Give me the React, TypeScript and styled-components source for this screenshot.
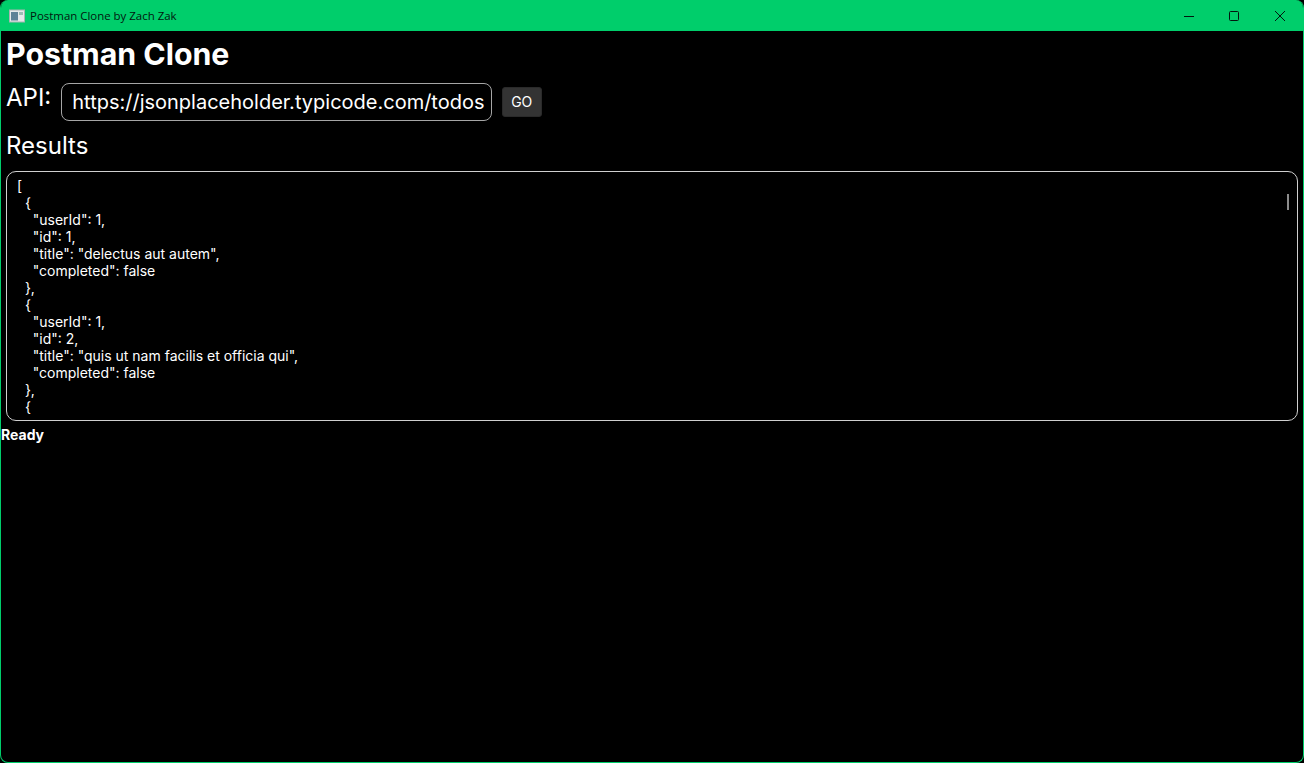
import React from 'react';
import styled, { createGlobalStyle } from 'styled-components';

const GlobalStyle = createGlobalStyle`
  html, body {
    margin: 0;
    height: 100%;
    background: #000;
  }
  * {
    box-sizing: border-box;
  }
`;

const Frame = styled.div`
  position: relative;
  width: 1304px;
  height: 763px;
  display: flex;
  flex-direction: column;
  overflow: hidden;
  background: #000;
  border: 1px solid #00ce6b;
  border-top: none;
  border-radius: 8px;
  font-family: Inter, "Liberation Sans", sans-serif;
  color: #fff;
`;

const TitleBar = styled.header`
  height: 31px;
  margin: 0 -1px;
  padding-right: 1px;
  flex: none;
  display: flex;
  align-items: center;
  background: #00ce6b;
`;

const AppIcon = styled.svg`
  width: 16px;
  height: 16px;
  margin: 0 5px 0 9px;
  flex: none;
`;

const WindowTitle = styled.span`
  flex: 1;
  font-family: "Open Sans", "Noto Sans", sans-serif;
  font-size: 11.45px;
  color: #02170e;
`;

const WindowButton = styled.button`
  width: 46px;
  height: 30px;
  padding: 0;
  display: flex;
  align-items: center;
  justify-content: center;
  background: none;
  border: none;
`;

const WindowGlyph = styled.svg`
  width: 12px;
  height: 12px;
  fill: none;
  stroke: #02170e;
  stroke-width: 1;
`;

const Content = styled.main`
  flex: 1;
  display: flex;
  flex-direction: column;
`;

const Heading = styled.h1`
  margin: 0;
  padding: 5px 0 0 5px;
  height: 52px;
  font-size: 30.3px;
  line-height: 36px;
  font-weight: 700;
`;

const ApiRow = styled.div`
  display: flex;
  align-items: flex-start;
  padding-left: 5px;
  height: 38px;
`;

const ApiLabel = styled.label`
  font-size: 24px;
  line-height: 29px;
  margin-right: 10px;
`;

const UrlInput = styled.input`
  width: 431px;
  height: 38px;
  padding: 0 6px 0 10px;
  background: #000;
  border: 1px solid #a6a6a6;
  border-radius: 8px;
  outline: none;
  color: #fff;
  font-family: inherit;
  font-size: 20px;
`;

const GoButton = styled.button`
  width: 40px;
  height: 30px;
  margin: 4px 0 0 10px;
  padding: 0 1px 2px 0;
  background: #333;
  border: 1px solid #2a2a2a;
  border-radius: 3px;
  color: #fff;
  font-family: inherit;
  font-size: 14px;
`;

const SectionTitle = styled.h2`
  margin: 0;
  padding: 10px 0 0 5px;
  height: 50px;
  font-size: 24px;
  line-height: 29px;
  font-weight: 400;
`;

const ResultBox = styled.div`
  position: relative;
  width: 1292px;
  height: 250px;
  margin-left: 5px;
  padding: 5px 10px 0;
  overflow: hidden;
  border: 1px solid #d0d0d0;
  border-radius: 10px;
`;

const ResultText = styled.pre`
  margin: 0;
  font-family: Inter, "Liberation Sans", sans-serif;
  font-size: 14px;
  line-height: 17px;
  color: #fff;
`;

const ScrollThumb = styled.div`
  position: absolute;
  top: 22px;
  right: 8px;
  width: 2px;
  height: 16px;
  background: #8c8c8c;
`;

const Status = styled.div`
  height: 20px;
  padding-top: 5px;
  font-size: 14px;
  line-height: 17px;
  font-weight: 700;
`;

const results = `[
  {
    "userId": 1,
    "id": 1,
    "title": "delectus aut autem",
    "completed": false
  },
  {
    "userId": 1,
    "id": 2,
    "title": "quis ut nam facilis et officia qui",
    "completed": false
  },
  {`;

const App = () => {
  return (
    <>
      <GlobalStyle />
      <Frame>
        <TitleBar>
          <AppIcon viewBox="0 0 16 16">
            <rect x="0.5" y="2" width="15" height="12" fill="#e4e9e9" stroke="#a9b3b3" />
            <rect x="2" y="4" width="7" height="8.5" fill="#5d8296" />
            <rect x="10" y="4" width="4" height="3" fill="#9dbdb4" />
          </AppIcon>
          <WindowTitle>Postman Clone by Zach Zak</WindowTitle>
          <WindowButton aria-label="Minimize">
            <WindowGlyph viewBox="0 0 12 12">
              <path d="M2 6.5h10" />
            </WindowGlyph>
          </WindowButton>
          <WindowButton aria-label="Maximize">
            <WindowGlyph viewBox="0 0 12 12">
              <rect x="1.5" y="1.5" width="9" height="9" rx="1" />
            </WindowGlyph>
          </WindowButton>
          <WindowButton aria-label="Close">
            <WindowGlyph viewBox="0 0 12 12">
              <path d="M1 1l10 10M11 1L1 11" />
            </WindowGlyph>
          </WindowButton>
        </TitleBar>
        <Content>
          <Heading>Postman Clone</Heading>
          <ApiRow>
            <ApiLabel>API:</ApiLabel>
            <UrlInput readOnly value="https://jsonplaceholder.typicode.com/todos" />
            <GoButton>GO</GoButton>
          </ApiRow>
          <SectionTitle>Results</SectionTitle>
          <ResultBox>
            <ResultText>{results}</ResultText>
            <ScrollThumb />
          </ResultBox>
          <Status>Ready</Status>
        </Content>
      </Frame>
    </>
  );
};

export default App;
